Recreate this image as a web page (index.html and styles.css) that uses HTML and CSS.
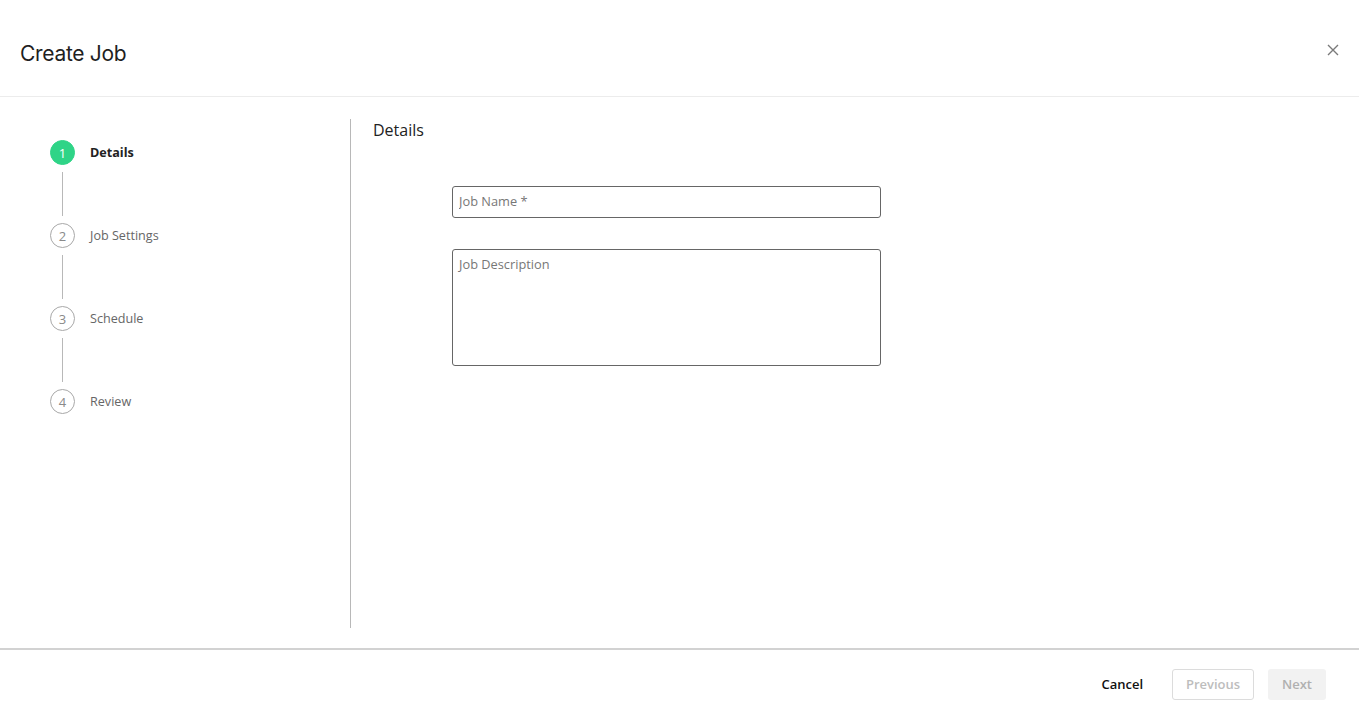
FILE: index.html
```html
<!DOCTYPE html>
<html lang="en">
<head>
    <meta charset="UTF-8">
    <title>Create Job</title>
    <link rel="stylesheet" href="styles.css">
</head>
<body>
    <div class="modal">
        <div class="header">
            <h1 class="title">Create Job</h1>
            <button class="close" aria-label="Close">
                <svg width="12" height="12" viewBox="0 0 12 12">
                    <path d="M1 1L11 11M11 1L1 11" stroke="#7a7a7a" stroke-width="1.4" fill="none"/>
                </svg>
            </button>
        </div>
        <div class="body">
            <div class="steps">
                <div class="step active">
                    <span class="num">1</span>
                    <span class="label">Details</span>
                </div>
                <div class="line"></div>
                <div class="step">
                    <span class="num">2</span>
                    <span class="label">Job Settings</span>
                </div>
                <div class="line"></div>
                <div class="step">
                    <span class="num">3</span>
                    <span class="label">Schedule</span>
                </div>
                <div class="line"></div>
                <div class="step">
                    <span class="num">4</span>
                    <span class="label">Review</span>
                </div>
            </div>
            <div class="content">
                <h2 class="section">Details</h2>
                <div class="form">
                    <input class="field" type="text" placeholder="Job Name *">
                    <textarea class="field area" placeholder="Job Description"></textarea>
                </div>
            </div>
        </div>
        <div class="footer">
            <button class="btn cancel">Cancel</button>
            <button class="btn prev" disabled>Previous</button>
            <button class="btn next" disabled>Next</button>
        </div>
    </div>
</body>
</html>
```

FILE: styles.css
```css
*{
    margin: 0;padding: 0;
    box-sizing: border-box;
}
body{
    font-family: "Open Sans", "Liberation Sans", sans-serif;
    background: #fff;
    color: #222;
}
.modal{
    width: 1359px;
    height: 714px;
    display: flex;
    flex-direction: column;
}
.header{
    height: 97px;
    border-bottom: 1px solid #ececec;
    display: flex;
    align-items: center;
    justify-content: space-between;
    padding: 10px 20px 0 20px;
}
.title{
    font-family: Inter, "Noto Sans", sans-serif;
    font-size: 21px;
    font-weight: 400;
    color: #1f1f1f;
    letter-spacing: -0.3px;
}
.close{
    border: none;
    background: none;
    width: 16px;
    height: 16px;
    display: flex;
    align-items: center;
    justify-content: center;
    margin-right: -2px;
    margin-bottom: 6px;
}
.body{
    flex: 1;
    display: flex;
    padding: 22px 0 20px 0;
}
.steps{
    width: 351px;
    border-right: 1px solid #b8b8b8;
    padding: 21px 0 0 50px;
}
.step{
    display: flex;
    align-items: center;
    height: 25px;
}
.num{
    width: 25px;
    height: 25px;
    border-radius: 50%;
    border: 1px solid #a8a8a8;
    color: #8a8a8a;
    font-size: 13px;
    display: flex;
    align-items: center;
    justify-content: center;
}
.label{
    margin-left: 15px;
    font-size: 12.6px;
    color: #666;
    margin-top: -1px;
}
.step.active .num{
    background: #2fd487;
    border-color: #2fd487;
    color: #fff;
}
.step.active .label{
    font-weight: 700;
    color: #222;
}
.line{
    width: 1px;
    height: 44px;
    background: #b8b8b8;
    margin: 7px 0 7px 12px;
}
.content{
    flex: 1;
    padding-left: 22px;
}
.section{
    font-size: 16px;
    font-weight: 400;
    color: #222;
    line-height: 22px;
}
.form{
    margin: 45px 0 0 79px;
    width: 429px;
    display: flex;
    flex-direction: column;
    gap: 31px;
}
.field{
    width: 429px;
    height: 32px;
    border: 1px solid #666;
    border-radius: 3px;
    padding: 0 6px 2px 6px;
    font-family: "Open Sans", "Liberation Sans", sans-serif;
    font-size: 12.8px;
    color: #222;
    outline: none;
}
.field::placeholder{
    color: #777;
}
.area{
    height: 117px;
    padding: 5px 6px;
    resize: none;
}
.footer{
    height: 66px;
    border-top: 2px solid #d2d2d2;
    display: flex;
    align-items: center;
    justify-content: flex-end;
    padding: 4px 33px 0 0;
    gap: 14px;
}
.btn{
    font-family: "Open Sans", "Liberation Sans", sans-serif;
    font-size: 13px;
    height: 31px;
    border-radius: 3px;
    background: #fff;
    border: 1px solid transparent;
}
.cancel{
    font-weight: 600;
    color: #111;
    padding: 0 14px 0 16px;
}
.prev{
    width: 82px;
    border-color: #dcdcdc;
    color: #bdbdbd;
    font-weight: 600;
}
.next{
    width: 58px;
    background: #f2f2f2;
    color: #b0b0b0;
    font-weight: 600;
}
```
